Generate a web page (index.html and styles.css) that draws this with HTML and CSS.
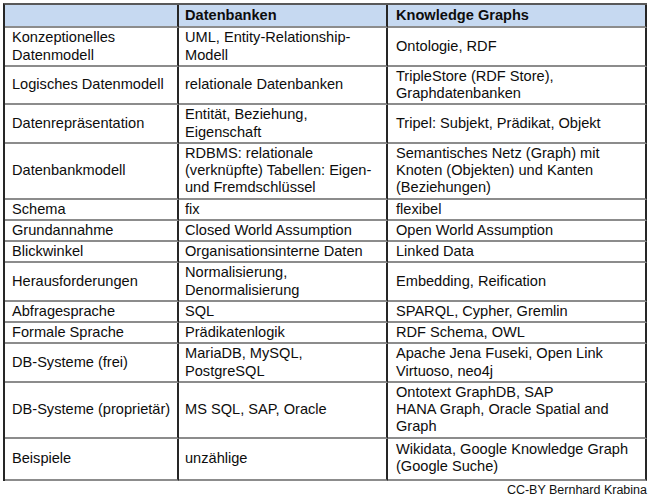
FILE: index.html
```html
<!DOCTYPE html>
<html lang="de">
<head>
<meta charset="utf-8">
<title>Datenbanken vs. Knowledge Graphs</title>
<link rel="stylesheet" href="styles.css">
</head>
<body>
<div class="page">
<table class="cmp">
<colgroup>
<col class="c1">
<col class="c2">
<col class="c3">
</colgroup>
<thead>
<tr><th class="k1"></th><th class="k2">Datenbanken</th><th class="k3">Knowledge Graphs</th></tr>
</thead>
<tbody>
<tr><td class="k1">Konzeptionelles<br>Datenmodell</td><td class="k2">UML, Entity-Relationship-<br>Modell</td><td class="k3">Ontologie, RDF</td></tr>
<tr><td class="k1">Logisches Datenmodell</td><td class="k2">relationale Datenbanken</td><td class="k3">TripleStore (RDF Store),<br>Graphdatenbanken</td></tr>
<tr><td class="k1">Datenrepräsentation</td><td class="k2">Entität, Beziehung,<br>Eigenschaft</td><td class="k3">Tripel: Subjekt, Prädikat, Objekt</td></tr>
<tr><td class="k1">Datenbankmodell</td><td class="k2">RDBMS: relationale<br>(verknüpfte) Tabellen: Eigen-<br>und Fremdschlüssel</td><td class="k3">Semantisches Netz (Graph) mit<br>Knoten (Objekten) und Kanten<br>(Beziehungen)</td></tr>
<tr><td class="k1">Schema</td><td class="k2">fix</td><td class="k3">flexibel</td></tr>
<tr><td class="k1">Grundannahme</td><td class="k2">Closed World Assumption</td><td class="k3">Open World Assumption</td></tr>
<tr><td class="k1">Blickwinkel</td><td class="k2">Organisationsinterne Daten</td><td class="k3">Linked Data</td></tr>
<tr><td class="k1">Herausforderungen</td><td class="k2">Normalisierung,<br>Denormalisierung</td><td class="k3">Embedding, Reification</td></tr>
<tr><td class="k1">Abfragesprache</td><td class="k2">SQL</td><td class="k3">SPARQL, Cypher, Gremlin</td></tr>
<tr><td class="k1">Formale Sprache</td><td class="k2">Prädikatenlogik</td><td class="k3">RDF Schema, OWL</td></tr>
<tr><td class="k1">DB-Systeme (frei)</td><td class="k2">MariaDB, MySQL,<br>PostgreSQL</td><td class="k3">Apache Jena Fuseki, Open Link<br>Virtuoso, neo4j</td></tr>
<tr><td class="k1">DB-Systeme (proprietär)</td><td class="k2">MS SQL, SAP, Oracle</td><td class="k3">Ontotext GraphDB, SAP<br>HANA Graph, Oracle Spatial and<br>Graph</td></tr>
<tr class="last"><td class="k1">Beispiele</td><td class="k2">unzählige</td><td class="k3">Wikidata, Google Knowledge Graph<br>(Google Suche)</td></tr>
</tbody>
</table>
<div class="credit">CC-BY Bernhard Krabina</div>
</div>
</body>
</html>
```
FILE: styles.css
```css
html, body {
  margin: 0;
  padding: 0;
  background: #ffffff;
}
body {
  font-family: "Liberation Sans", Arial, sans-serif;
  color: #0d0d0d;
}
.page {
  width: 652px;
  height: 498px;
  padding: 3px 0 0 3px;
  box-sizing: border-box;
  overflow: hidden;
}
.cmp {
  border-collapse: separate;
  border-spacing: 0;
  table-layout: fixed;
  width: 644px;
  border-left: 2px solid #262626;
  border-top: 2px solid #595959;
  font-size: 14.6px;
  line-height: 17.25px;
}
.c1 { width: 174px; }
.c2 { width: 209px; }
.c3 { width: 259px; }
.cmp th,
.cmp td {
  border-right: 2px solid #262626;
  border-bottom: 2px solid #8c8c8c;
  vertical-align: middle;
  text-align: left;
  white-space: nowrap;
  padding: 1px 2px 1px 7px;
}
.cmp th {
  background: #c6d9f1;
  font-weight: bold;
  padding-top: 2px;
  padding-bottom: 2px;
}
.cmp .k2 { padding-left: 6px; }
.cmp .k3 { padding-left: 8px; }
.cmp tr.last td {
  padding-top: 2.5px;
  padding-bottom: 3px;
}
.credit {
  width: 644px;
  text-align: right;
  font-size: 12.5px;
  line-height: 14px;
  margin-top: 2px;
  color: #111111;
}
```
